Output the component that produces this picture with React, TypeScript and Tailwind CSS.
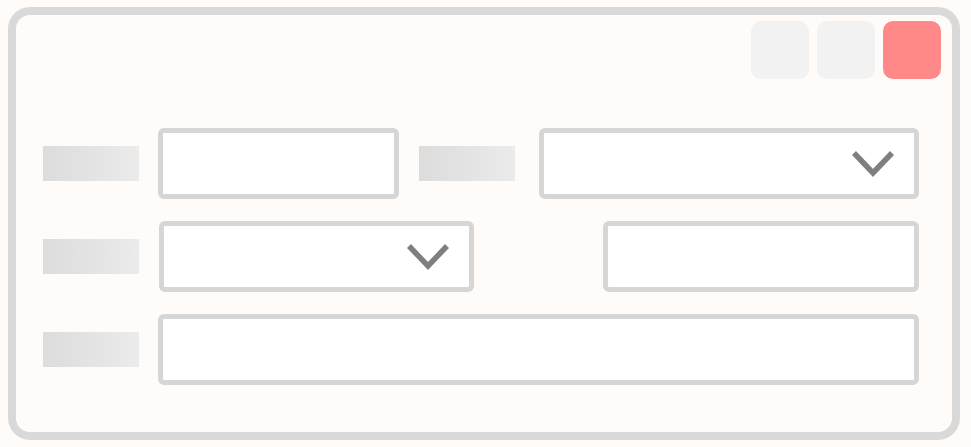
import React from "react";

function Chevron() {
  return (
    <svg width="44" height="28" viewBox="0 0 44 28" className="shrink-0">
      <polyline
        points="3,3 22,23 41,3"
        fill="none"
        stroke="#7f7f7f"
        strokeWidth="5.5"
        strokeLinejoin="miter"
      />
    </svg>
  );
}

function Label() {
  return (
    <div className="w-[96px] h-[35px] shrink-0 bg-gradient-to-r from-[#dcdcdc] to-[#ebebeb]" />
  );
}

function Field({ className = "", select = false }: { className?: string; select?: boolean }) {
  return (
    <div
      className={
        "h-[71px] shrink-0 bg-white border-[5px] border-[#d6d6d6] rounded-[6px] flex items-center justify-end pr-[19px] " +
        className
      }
    >
      {select && <Chevron />}
    </div>
  );
}

export default function App() {
  return (
    <div className="w-[971px] h-[447px] bg-[#fffbf8] pt-[7px] pl-[8px]">
      <div className="w-[952px] h-[433px] border-8 border-[#d9d9d9] rounded-[22px] bg-[#fffbf8] flex flex-col">
        <div className="flex justify-end gap-[8px] pt-[6px] pr-[11px]">
          <div className="w-[58px] h-[58px] rounded-[10px] bg-[#f2f2f2]" />
          <div className="w-[58px] h-[58px] rounded-[10px] bg-[#f2f2f2]" />
          <div className="w-[58px] h-[58px] rounded-[10px] bg-[#ff8888]" />
        </div>
        <div className="flex flex-col gap-[22px] pl-[27px] mt-[49px]">
          <div className="flex items-center">
            <Label />
            <Field className="w-[241px] ml-[19px]" />
            <div className="ml-[20px]">
              <Label />
            </div>
            <Field className="w-[380px] ml-[24px]" select />
          </div>
          <div className="flex items-center">
            <Label />
            <Field className="w-[315px] ml-[20px]" select />
            <Field className="w-[316px] ml-[129px]" />
          </div>
          <div className="flex items-center">
            <Label />
            <Field className="w-[761px] ml-[19px]" />
          </div>
        </div>
      </div>
    </div>
  );
}
